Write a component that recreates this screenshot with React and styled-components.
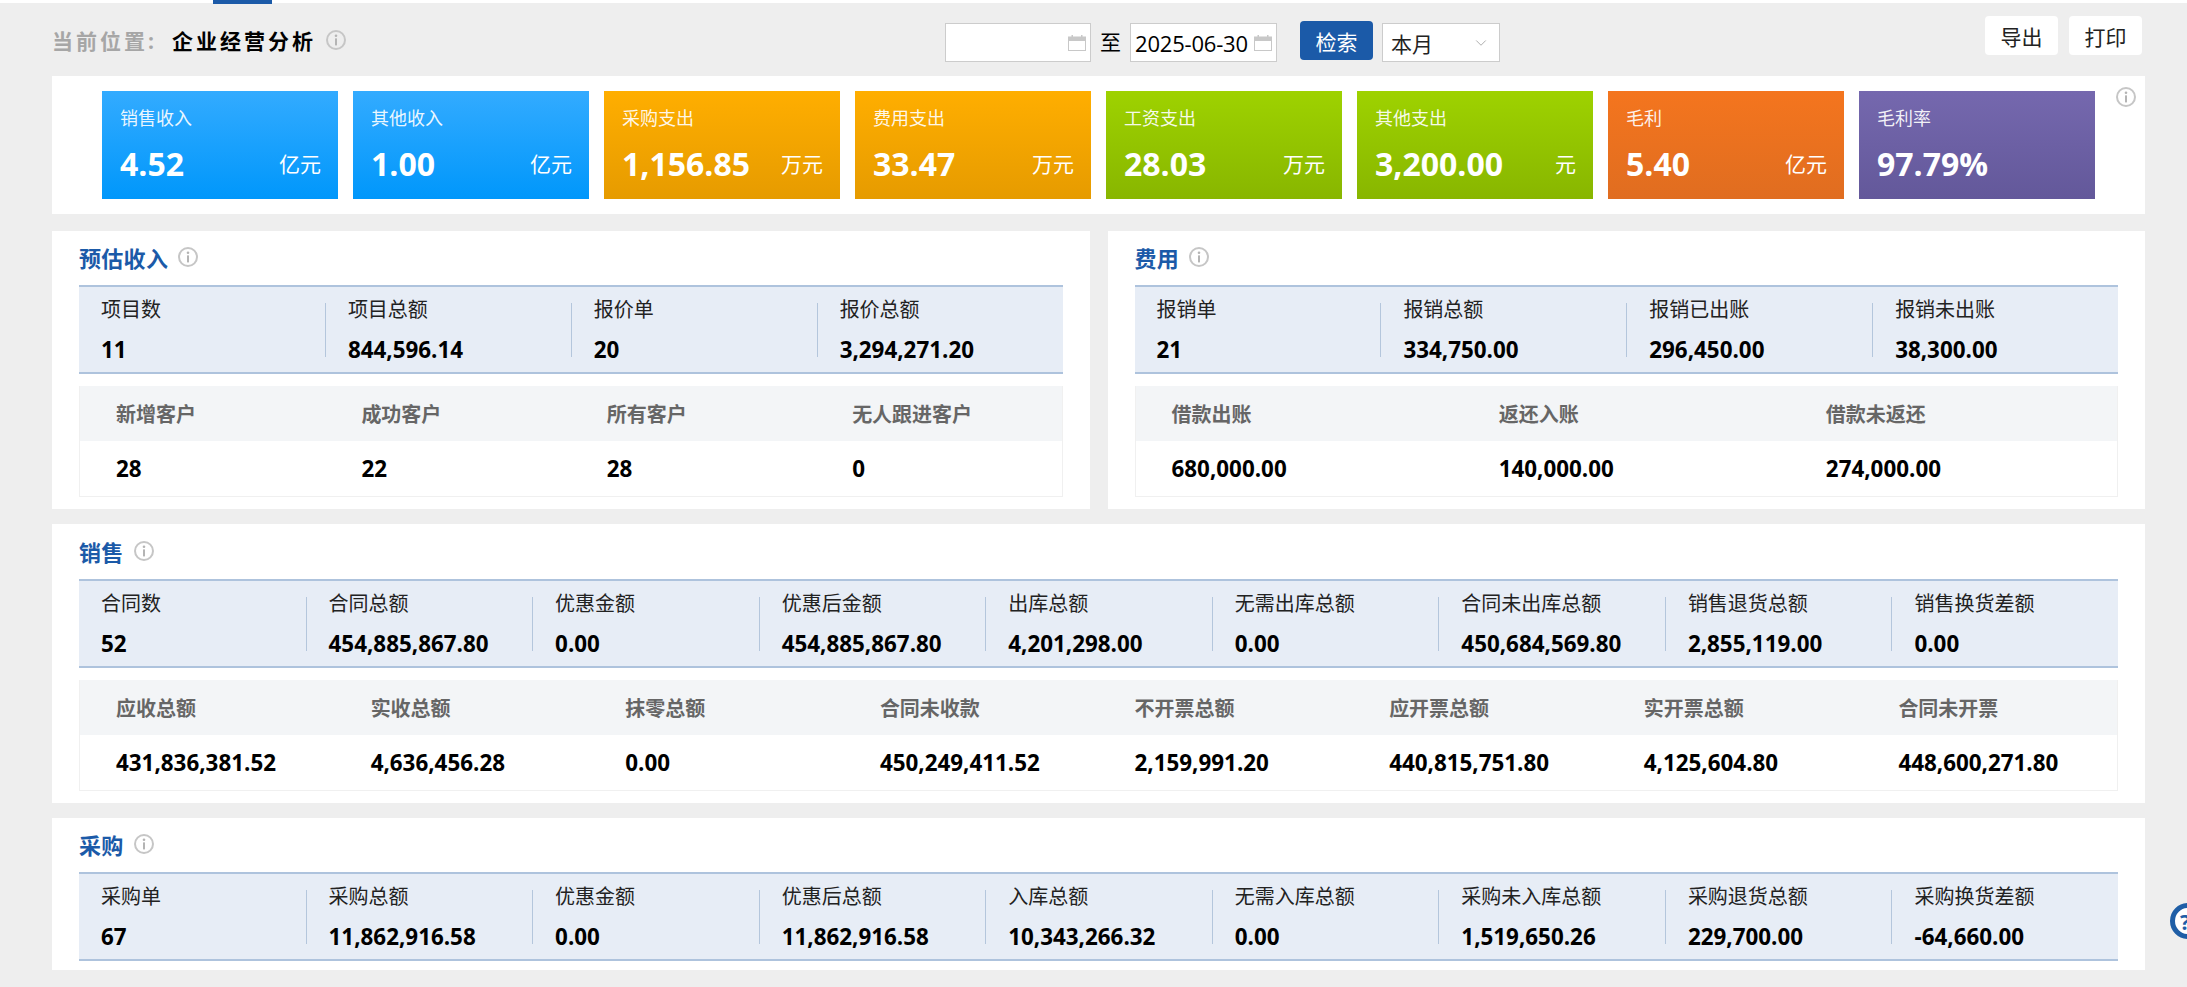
import styled, { createGlobalStyle } from "styled-components";
import { ChevronDown } from "lucide-react";

const GlobalStyle = createGlobalStyle`
  * { box-sizing: border-box; }
  html, body { margin: 0; padding: 0; }
  body {
    background: #eeeeee;
    font-family: "Open Sans", "Noto Sans CJK SC", sans-serif;
    color: #000;
    overflow: hidden;
  }
`;

const Page = styled.div`
  position: relative;
  width: 2187px;
  height: 987px;
  overflow: hidden;
`;

const TopStrip = styled.div`
  height: 3px;
  background: #fff;
  padding-left: 213px;
`;

const TopTab = styled.div`
  width: 59px;
  height: 4px;
  background: #1b5aa8;
`;

const Content = styled.div`
  padding: 0 42px 0 52px;
`;

const Toolbar = styled.div`
  display: flex;
  align-items: flex-start;
  height: 73px;
  padding-top: 13px;
`;

const Crumb = styled.div`
  flex: 0 0 893px;
  display: flex;
  align-items: center;
  height: 48px;
  font-size: 21px;
  font-weight: 700;
  letter-spacing: 3px;
  white-space: nowrap;
`;

const CrumbLabel = styled.span`
  color: #a6a6a6;
  margin-right: 15px;
`;

const CrumbTitle = styled.span`
  color: #000;
  margin-right: 10px;
`;

const Filters = styled.div`
  display: flex;
  align-items: flex-start;
  padding-top: 5px;
`;

const DateBox = styled.div`
  width: ${(p) => p.$w}px;
  height: 39px;
  margin-top: 2px;
  display: flex;
  align-items: center;
  justify-content: space-between;
  padding: 0 4px;
  background: #fff;
  border: 1px solid #cccccc;
  font-size: 22px;
  letter-spacing: -0.2px;
  white-space: nowrap;
`;

const To = styled.span`
  width: 39px;
  margin-top: 2px;
  line-height: 39px;
  text-align: center;
  font-size: 21px;
`;

const SearchBtn = styled.button`
  width: 73px;
  height: 39px;
  margin-left: 23px;
  padding: 0;
  background: #1b5aa8;
  border: 0;
  border-radius: 4px;
  color: #fff;
  font: inherit;
  font-size: 21px;
`;

const Select = styled.div`
  width: 118px;
  height: 39px;
  margin: 2px 0 0 9px;
  padding: 0 9px 0 8px;
  display: flex;
  align-items: center;
  justify-content: space-between;
  background: #fff;
  border: 1px solid #cccccc;
  font-size: 21px;
  color: #222;
  svg { color: #a8a8a8; }
`;

const Actions = styled.div`
  display: flex;
  gap: 11px;
  margin-left: auto;
  margin-right: 3px;
`;

const ActionBtn = styled.button`
  width: 73px;
  height: 39px;
  padding: 0;
  background: #fff;
  border: 0;
  border-radius: 4px;
  color: #222;
  font: inherit;
  font-size: 21px;
`;

const CardsPanel = styled.section`
  position: relative;
  display: flex;
  gap: 15px;
  height: 138px;
  padding: 15px 0 15px 50px;
  background: #fff;
`;

const Card = styled.div`
  width: 236px;
  height: 108px;
  padding: 14px 17px 0 18px;
  color: #fff;
  background: linear-gradient(${(p) => p.$from}, ${(p) => p.$to});
`;

const CardLabel = styled.div`
  font-size: 18px;
  line-height: 26px;
  color: rgba(255, 255, 255, 0.92);
`;

const CardRow = styled.div`
  display: flex;
  align-items: center;
  justify-content: space-between;
  margin-top: 10px;
  height: 44px;
`;

const CardValue = styled.span`
  font-size: 32px;
  font-weight: 700;
`;

const CardUnit = styled.span`
  font-size: 21px;
`;

const CardsInfo = styled.span`
  position: absolute;
  right: 9px;
  top: 11px;
  display: flex;
`;

const Row = styled.div`
  display: flex;
  gap: 18px;
  margin-top: 17px;
`;

const Panel = styled.section`
  flex: 1;
  padding: ${(p) => p.$pt || 0}px 27px ${(p) => p.$pb || 12}px;
  margin-top: ${(p) => p.$mt || 0}px;
  background: #fff;
`;

const PanelTitle = styled.div`
  display: flex;
  align-items: center;
  gap: 10px;
  height: 54px;
  padding-bottom: 2px;
  font-size: 22px;
  letter-spacing: 0.3px;
  font-weight: 700;
  color: #1b5aa8;
`;

const StatBar = styled.div`
  display: grid;
  grid-template-columns: repeat(${(p) => p.$cols}, 1fr);
  height: 89px;
  padding-top: 16px;
  background: #e7edf6;
  border-top: 2px solid #aec3dd;
  border-bottom: 2px solid #aec3dd;
`;

const Stat = styled.div`
  height: 54px;
  padding-left: 22px;
  border-left: ${(p) => (p.$first ? "0" : "1px solid #b4c6dc")};
  white-space: nowrap;
`;

const StatLabel = styled.div`
  margin-top: -4px;
  font-size: 20px;
  line-height: 22px;
  color: #222;
`;

const StatValue = styled.div`
  margin-top: 17px;
  font-size: 22.4px;
  line-height: 24px;
  font-weight: 700;
`;

const Table = styled.div`
  margin-top: 12px;
  border: 1px solid #f0f0f0;
  border-top: 0;
`;

const TableRow = styled.div`
  display: grid;
  grid-template-columns: repeat(${(p) => p.$cols}, 1fr);
  height: 55px;
  align-items: center;
  background: ${(p) => (p.$head ? "#f3f5f7" : "#fff")};
`;

const HeadCell = styled.div`
  padding-left: 36px;
  font-size: 20px;
  font-weight: 700;
  color: #666;
  white-space: nowrap;
`;

const BodyCell = styled.div`
  padding-left: 36px;
  font-size: 22.4px;
  font-weight: 700;
  white-space: nowrap;
`;

const HelpBtn = styled.div`
  position: absolute;
  left: 2170px;
  top: 903px;
  width: 36px;
  height: 36px;
  border: 5px solid #1f5ea6;
  border-radius: 50%;
  background: #fff;
  color: #1f5ea6;
  font-size: 22px;
  font-weight: 700;
  line-height: 26px;
  padding-left: 5px;
`;

const InfoIcon = () => (
  <svg width="20" height="20" viewBox="0 0 20 20" fill="none">
    <circle cx="10" cy="10" r="9" stroke="#c6c6c6" strokeWidth="2" />
    <circle cx="10" cy="5.8" r="1.3" fill="#b4b4b4" />
    <rect x="9" y="8.4" width="2" height="7" fill="#b4b4b4" />
  </svg>
);

const CalendarIcon = () => (
  <svg width="18" height="16" viewBox="0 0 18 16">
    <rect x="0.5" y="2" width="17" height="13.5" fill="#fff" stroke="#c8c8c8" />
    <rect x="0.5" y="2" width="17" height="4" fill="#c8c8c8" />
    <rect x="3.5" y="0" width="1.5" height="3" fill="#c8c8c8" />
    <rect x="13" y="0" width="1.5" height="3" fill="#c8c8c8" />
  </svg>
);

const cards = [
  { label: "销售收入", value: "4.52", unit: "亿元", from: "#33abff", to: "#0097fb" },
  { label: "其他收入", value: "1.00", unit: "亿元", from: "#33abff", to: "#0097fb" },
  { label: "采购支出", value: "1,156.85", unit: "万元", from: "#ffae00", to: "#e69b00" },
  { label: "费用支出", value: "33.47", unit: "万元", from: "#ffae00", to: "#e69b00" },
  { label: "工资支出", value: "28.03", unit: "万元", from: "#9ed200", to: "#88b600" },
  { label: "其他支出", value: "3,200.00", unit: "元", from: "#9ed200", to: "#88b600" },
  { label: "毛利", value: "5.40", unit: "亿元", from: "#f4751e", to: "#e06d20" },
  { label: "毛利率", value: "97.79%", unit: "", from: "#7568ae", to: "#63589a" },
];

const incomeStats = [["项目数", "11"], ["项目总额", "844,596.14"], ["报价单", "20"], ["报价总额", "3,294,271.20"]];
const incomeTable = [["新增客户", "28"], ["成功客户", "22"], ["所有客户", "28"], ["无人跟进客户", "0"]];
const costStats = [["报销单", "21"], ["报销总额", "334,750.00"], ["报销已出账", "296,450.00"], ["报销未出账", "38,300.00"]];
const costTable = [["借款出账", "680,000.00"], ["返还入账", "140,000.00"], ["借款未返还", "274,000.00"]];
const salesStats = [
  ["合同数", "52"], ["合同总额", "454,885,867.80"], ["优惠金额", "0.00"],
  ["优惠后金额", "454,885,867.80"], ["出库总额", "4,201,298.00"], ["无需出库总额", "0.00"],
  ["合同未出库总额", "450,684,569.80"], ["销售退货总额", "2,855,119.00"], ["销售换货差额", "0.00"],
];
const salesTable = [
  ["应收总额", "431,836,381.52"], ["实收总额", "4,636,456.28"], ["抹零总额", "0.00"],
  ["合同未收款", "450,249,411.52"], ["不开票总额", "2,159,991.20"], ["应开票总额", "440,815,751.80"],
  ["实开票总额", "4,125,604.80"], ["合同未开票", "448,600,271.80"],
];
const buyStats = [
  ["采购单", "67"], ["采购总额", "11,862,916.58"], ["优惠金额", "0.00"],
  ["优惠后总额", "11,862,916.58"], ["入库总额", "10,343,266.32"], ["无需入库总额", "0.00"],
  ["采购未入库总额", "1,519,650.26"], ["采购退货总额", "229,700.00"], ["采购换货差额", "-64,660.00"],
];

const Stats = ({ items }) => (
  <StatBar $cols={items.length}>
    {items.map(([label, value], i) => (
      <Stat key={label} $first={i === 0}>
        <StatLabel>{label}</StatLabel>
        <StatValue>{value}</StatValue>
      </Stat>
    ))}
  </StatBar>
);

const DataTable = ({ items }) => (
  <Table>
    <TableRow $head $cols={items.length}>
      {items.map(([label]) => <HeadCell key={label}>{label}</HeadCell>)}
    </TableRow>
    <TableRow $cols={items.length}>
      {items.map(([label, value]) => <BodyCell key={label}>{value}</BodyCell>)}
    </TableRow>
  </Table>
);

const Title = ({ children }) => (
  <PanelTitle>
    {children}
    <InfoIcon />
  </PanelTitle>
);

const App = () => {
  return (
    <Page>
      <GlobalStyle />
      <TopStrip><TopTab /></TopStrip>
      <Content>
        <Toolbar>
          <Crumb>
            <CrumbLabel>当前位置:</CrumbLabel>
            <CrumbTitle>企业经营分析</CrumbTitle>
            <InfoIcon />
          </Crumb>
          <Filters>
            <DateBox $w={146}><span /><CalendarIcon /></DateBox>
            <To>至</To>
            <DateBox $w={147}>2025-06-30<CalendarIcon /></DateBox>
            <SearchBtn>检索</SearchBtn>
            <Select>本月<ChevronDown size={18} strokeWidth={1.25} /></Select>
          </Filters>
          <Actions>
            <ActionBtn>导出</ActionBtn>
            <ActionBtn>打印</ActionBtn>
          </Actions>
        </Toolbar>

        <CardsPanel>
          {cards.map((c) => (
            <Card key={c.label} $from={c.from} $to={c.to}>
              <CardLabel>{c.label}</CardLabel>
              <CardRow>
                <CardValue>{c.value}</CardValue>
                <CardUnit>{c.unit}</CardUnit>
              </CardRow>
            </Card>
          ))}
          <CardsInfo><InfoIcon /></CardsInfo>
        </CardsPanel>

        <Row>
          <Panel>
            <Title>预估收入</Title>
            <Stats items={incomeStats} />
            <DataTable items={incomeTable} />
          </Panel>
          <Panel>
            <Title>费用</Title>
            <Stats items={costStats} />
            <DataTable items={costTable} />
          </Panel>
        </Row>

        <Panel $mt={15} $pt={1}>
          <Title>销售</Title>
          <Stats items={salesStats} />
          <DataTable items={salesTable} />
        </Panel>

        <Panel $mt={15} $pb={9}>
          <Title>采购</Title>
          <Stats items={buyStats} />
        </Panel>
      </Content>
      <HelpBtn>?</HelpBtn>
    </Page>
  );
};

export default App;
